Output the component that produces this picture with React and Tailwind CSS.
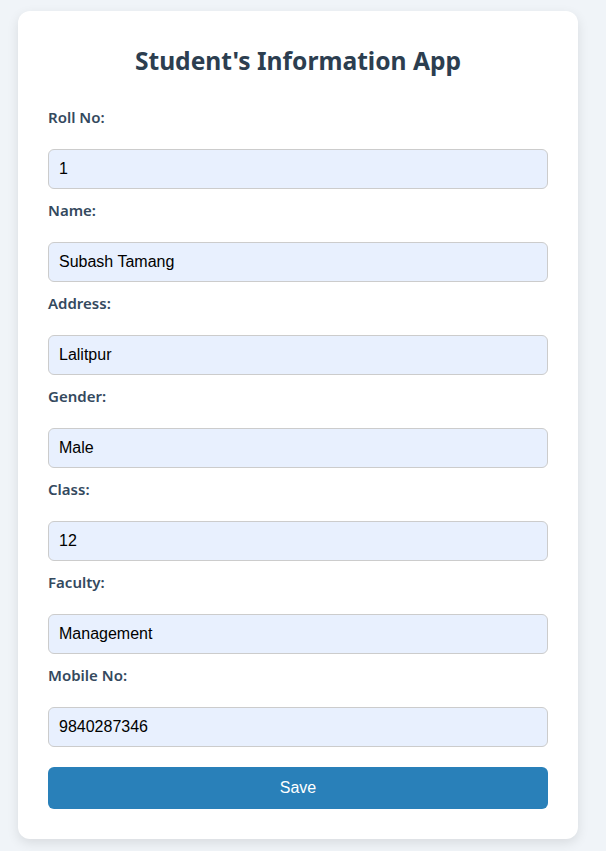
export default function App() {
  const fields = [
    ["Roll No:", "1"],
    ["Name:", "Subash Tamang"],
    ["Address:", "Lalitpur"],
    ["Gender:", "Male"],
    ["Class:", "12"],
    ["Faculty:", "Management"],
    ["Mobile No:", "9840287346"],
  ];
  return (
    <div className="min-h-[851px] bg-[#f0f4f8] pt-[11px] pl-[18px]" style={{ fontFamily: "'Noto Sans', sans-serif" }}>
      <div className="w-[560px] bg-white rounded-[12px] p-[30px] shadow-[0_4px_12px_rgba(0,0,0,0.1)]">
        <h2 className="text-[24.6px] leading-[39px] font-bold text-[#2c3e50] text-center mb-[16px]">
          Student's Information App
        </h2>
        <form className="flex flex-col" onSubmit={(e) => e.preventDefault()}>
          {fields.map(([label, value]) => (
            <div key={label} className="flex flex-col">
              <label className="block mt-[11px] mb-[22px] text-[15px] leading-[20px] font-semibold text-[#34495e]">
                {label}
              </label>
              <input
                readOnly
                value={value}
                className="h-[40px] w-full rounded-[6px] border border-[#cccccc] bg-[#e8f0fe] px-[10px] text-[16px] text-black outline-none"
                style={{ fontFamily: "'Liberation Sans', Arial, sans-serif" }}
              />
            </div>
          ))}
          <button
            type="submit"
            className="mt-[20px] h-[42px] w-full rounded-[6px] bg-[#2980b9] text-white text-[16px]"
            style={{ fontFamily: "'Liberation Sans', Arial, sans-serif" }}
          >
            Save
          </button>
        </form>
      </div>
    </div>
  );
}
